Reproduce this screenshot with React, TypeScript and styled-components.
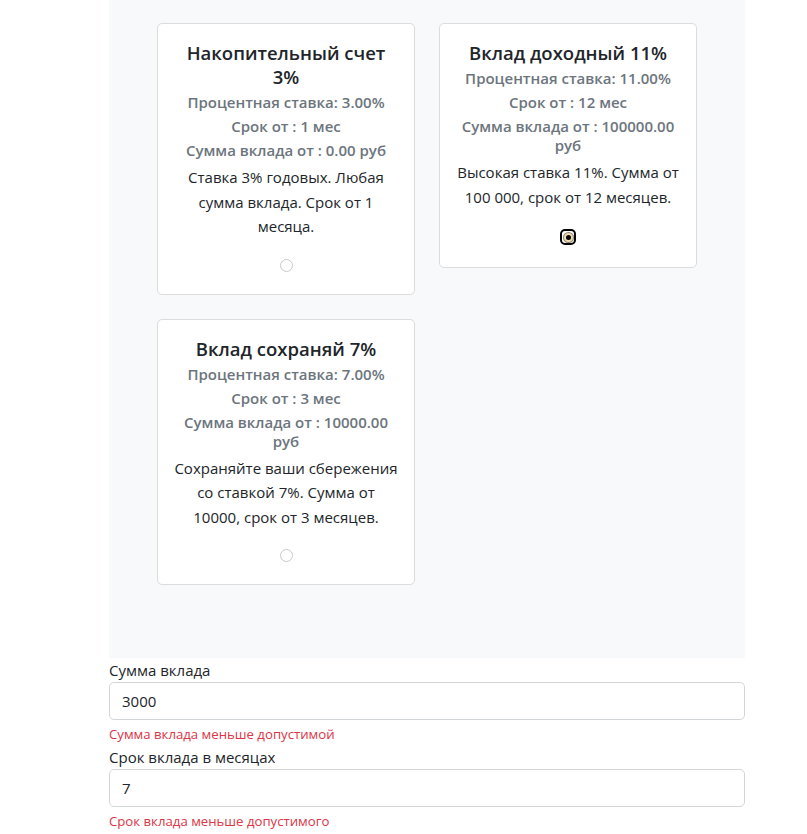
import { useState } from "react";
import styled, { createGlobalStyle } from "styled-components";

const GlobalStyle = createGlobalStyle`
  body {
    margin: 0;
    font-family: "Open Sans", "Noto Sans", sans-serif;
    color: #212529;
    background: #fff;
  }
  * {
    box-sizing: border-box;
  }
`;

const Page = styled.div`
  width: 636px;
  margin-left: 109px;
`;

const Panel = styled.div`
  background-color: #f8f9fa;
  padding: 23px 48px 73px;
`;

const CardGrid = styled.div`
  display: grid;
  grid-template-columns: 258px 258px;
  gap: 24px;
  align-items: start;
`;

const Card = styled.div`
  background-color: #fff;
  border: 1px solid #dcdcdc;
  border-radius: 5px;
`;

const CardBody = styled.div`
  padding: 17px 16px 22px;
  text-align: center;
`;

const Title = styled.h5`
  margin: 0 0 4px;
  font-size: 18.5px;
  font-weight: 600;
  line-height: 24px;
`;

const Subtitle = styled.h6`
  margin: 0 0 5px;
  font-size: 15px;
  font-weight: 600;
  line-height: 19px;
  color: #6c757d;
`;

const Text = styled.p`
  margin: 5px 0 0;
  font-size: 15px;
  line-height: 24.5px;
`;

const RadioRow = styled.div`
  display: flex;
  justify-content: center;
  margin-top: 20px;
`;

const Radio = styled.input`
  appearance: none;
  margin: 0;
  width: 13px;
  height: 13px;
  border: 1px solid #c9c9c9;
  border-radius: 50%;
  background: #fff;
  display: grid;
  place-items: center;
  cursor: pointer;

  &:checked {
    width: 16px;
    height: 16px;
    border: 2px solid #000;
    border-radius: 5px;
    background: #fff;
  }

  &:checked::after {
    content: "";
    width: 5px;
    height: 5px;
    border-radius: 50%;
    background: #000;
    box-shadow: 0 0 0 2px #efdbb3, 0 0 0 3px #8a8070;
  }
`;

const Form = styled.div`
  display: flex;
  flex-direction: column;
`;

const Label = styled.label`
  font-size: 15px;
  line-height: 24px;
`;

const Input = styled.input`
  display: block;
  width: 100%;
  height: 38px;
  padding: 6px 12px;
  font-family: inherit;
  font-size: 15px;
  color: #212529;
  background: #fff;
  border: 1px solid #d3d6d9;
  border-radius: 5px;
  outline: none;
`;

const Feedback = styled.div`
  margin-top: 4px;
  font-size: 13.2px;
  line-height: 21px;
  color: #dc3545;
`;

type Deposit = {
  id: number;
  title: string;
  rate: string;
  term: number;
  min: string;
  description: string;
};

const deposits: Deposit[] = [
  {
    id: 1,
    title: "Накопительный счет 3%",
    rate: "3.00",
    term: 1,
    min: "0.00",
    description: "Ставка 3% годовых. Любая сумма вклада. Срок от 1 месяца.",
  },
  {
    id: 2,
    title: "Вклад доходный 11%",
    rate: "11.00",
    term: 12,
    min: "100000.00",
    description: "Высокая ставка 11%. Сумма от 100 000, срок от 12 месяцев.",
  },
  {
    id: 3,
    title: "Вклад сохраняй 7%",
    rate: "7.00",
    term: 3,
    min: "10000.00",
    description:
      "Сохраняйте ваши сбережения со ставкой 7%. Сумма от 10000, срок от 3 месяцев.",
  },
];

export default function App() {
  const [selected, setSelected] = useState(2);
  const [amount, setAmount] = useState("3000");
  const [months, setMonths] = useState("7");

  return (
    <Page>
      <GlobalStyle />
      <Panel>
        <CardGrid>
          {deposits.map((d) => (
            <Card key={d.id}>
              <CardBody>
                <Title>{d.title}</Title>
                <Subtitle>Процентная ставка: {d.rate}%</Subtitle>
                <Subtitle>Срок от : {d.term} мес</Subtitle>
                <Subtitle>Сумма вклада от : {d.min} руб</Subtitle>
                <Text>{d.description}</Text>
                <RadioRow>
                  <Radio
                    type="radio"
                    name="deposit"
                    checked={selected === d.id}
                    onChange={() => setSelected(d.id)}
                  />
                </RadioRow>
              </CardBody>
            </Card>
          ))}
        </CardGrid>
      </Panel>
      <Form>
        <Label>Сумма вклада</Label>
        <Input value={amount} onChange={(e) => setAmount(e.target.value)} />
        <Feedback>Сумма вклада меньше допустимой</Feedback>
        <Label>Срок вклада в месяцах</Label>
        <Input value={months} onChange={(e) => setMonths(e.target.value)} />
        <Feedback>Срок вклада меньше допустимого</Feedback>
      </Form>
    </Page>
  );
}
